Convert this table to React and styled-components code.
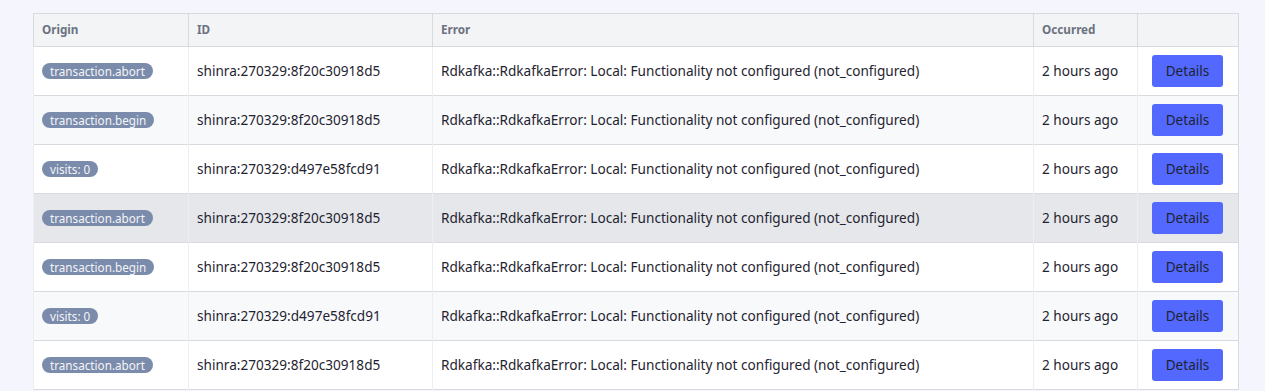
import React from "react";
import styled, { createGlobalStyle } from "styled-components";

const Global = createGlobalStyle`
  html, body { margin: 0; padding: 0; background: #f5f6fd; }
  body { font-family: "Noto Sans", "DejaVu Sans", sans-serif; }
`;

const Page = styled.div`
  padding: 13px 27px 0 33px;
`;

const Table = styled.table`
  width: 1205px;
  border-collapse: collapse;
  table-layout: fixed;
  border: 1px solid #d8dae0;
  font-size: 13.6px;
  color: #1f2430;
`;

const Th = styled.th`
  box-sizing: border-box;
  height: 33px;
  padding: 0 8px 2px;
  text-align: left;
  font-size: 11.7px;
  font-weight: 700;
  color: #6b7280;
  background: #f3f4f6;
  border: 1px solid #d8dae0;
  width: ${(p) => p.$w}px;
`;

const Row = styled.tr`
  background: ${(p) => (p.$hover ? "#e5e7eb" : p.$alt ? "#f8f9fb" : "#ffffff")};
  border-top: 1px solid #d8dae0;
`;

const Td = styled.td`
  box-sizing: border-box;
  height: 49px;
  padding: 0 8px 2px;
  border-left: 1px solid #eceef1;
  white-space: nowrap;
`;

const Badge = styled.span`
  display: inline-block;
  background: #7b8bab;
  color: #f3f5f8;
  font-size: 11.7px;
  line-height: 16px;
  padding: 0 8px;
  border-radius: 8px;
`;

const Button = styled.button`
  display: block;
  width: 71px;
  height: 32px;
  margin: 1px 0 0 6px;
  background: #5268ff;
  color: #1f2430;
  border: none;
  border-radius: 3px;
  font-family: inherit;
  font-size: 13.6px;
  padding: 0;
  cursor: pointer;
`;

const A = "shinra:270329:8f20c30918d5";
const B = "shinra:270329:d497e58fcd91";
const ERR = "Rdkafka::RdkafkaError: Local: Functionality not configured (not_configured)";

const rows = [
  ["transaction.abort", A],
  ["transaction.begin", A],
  ["visits: 0", B],
  ["transaction.abort", A],
  ["transaction.begin", A],
  ["visits: 0", B],
  ["transaction.abort", A],
];

export default function App() {
  return (
    <Page>
      <Global />
      <Table>
        <thead>
          <tr>
            <Th $w={155}>Origin</Th>
            <Th $w={244}>ID</Th>
            <Th $w={601}>Error</Th>
            <Th $w={104}>Occurred</Th>
            <Th $w={101}></Th>
          </tr>
        </thead>
        <tbody>
          {rows.map(([origin, id], i) => (
            <Row key={i} $alt={i % 2 === 1} $hover={i === 3}>
              <Td><Badge>{origin}</Badge></Td>
              <Td>{id}</Td>
              <Td>{ERR}</Td>
              <Td>2 hours ago</Td>
              <Td><Button>Details</Button></Td>
            </Row>
          ))}
        </tbody>
      </Table>
    </Page>
  );
}
